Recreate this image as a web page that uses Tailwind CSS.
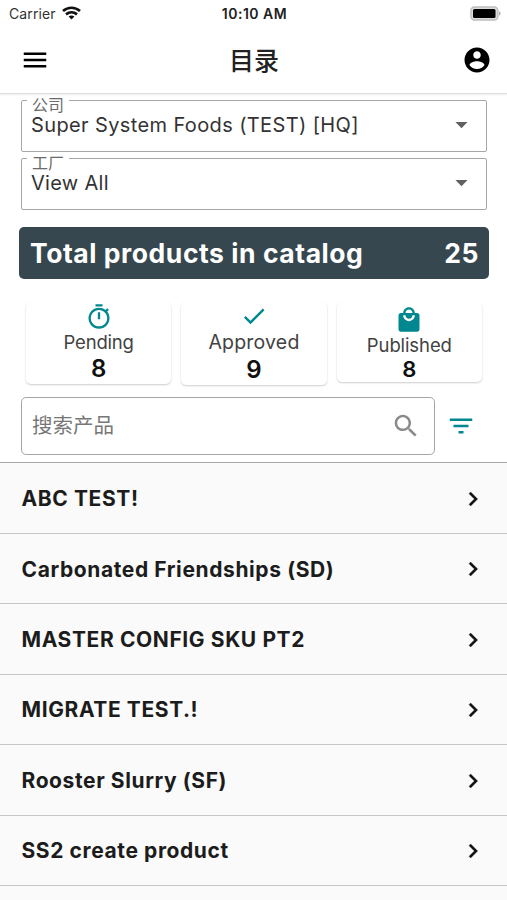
<!DOCTYPE html>
<html lang="zh">
<head>
  <meta charset="UTF-8">
  <meta name="viewport" content="width=device-width, initial-scale=1.0">
  <title>目录</title>
  <script src="https://cdn.jsdelivr.net/npm/@tailwindcss/browser@4"></script>
</head>
<body class="bg-white text-[#212121] font-['Inter','Noto_Sans_CJK_SC',sans-serif] h-[900px] overflow-hidden">

  <!-- Status bar -->
  <div class="h-7 pl-[9px] pr-[6px] grid grid-cols-3 items-center">
    <div class="flex items-center gap-[6px] text-sm leading-7 text-[#333] tracking-[0.1px]">
      Carrier
      <svg class="w-[19px] h-[14px] -mt-[3px]" viewBox="0 0 19 14" fill="none" stroke="#111" stroke-width="2.7">
        <path d="M1 5.1C6 .6 13 .6 18 5.1"/>
        <path d="M4 8.4c3.3-2.8 7.700-2.800 11 0"/>
        <path d="M9.500 13.500l-2.900-2.900c1.600-1.500 4.200-1.500 5.800 0z" fill="#111" stroke="none"/>
      </svg>
    </div>
    <div class="text-center text-sm leading-7 font-semibold tracking-[0.5px] whitespace-nowrap -ml-[1px]">10:10 AM</div>
    <svg class="w-[31px] h-[15px] justify-self-end -mt-[2px]" viewBox="0 0 31 15">
      <rect x=".9" y="1" width="27" height="13" rx="3.500" fill="#dcdcdc" stroke="#bdbdbd" stroke-width="1.300"/>
      <rect x="3" y="3" width="22.500" height="9" rx="1.500" fill="#000"/>
      <path d="M29 5.500c2 .6 2 3.400 0 4z" fill="#aaa"/>
    </svg>
  </div>

  <!-- Header -->
  <header class="h-[66px] pl-5 pr-[15px] pb-[2px] flex items-center justify-between border-b border-[#dedede] shadow-[0_1px_2px_rgba(0,0,0,0.08)]">
    <svg class="w-[30px] h-[30px]" viewBox="0 0 24 24" fill="#000"><path d="M3 18h18v-2H3v2zm0-5h18v-2H3v2zm0-7v2h18V6H3z"/></svg>
    <h1 class="text-[25px] font-medium leading-none pt-[3px] pr-[4px]">目录</h1>
    <svg class="w-[30px] h-[30px]" viewBox="0 0 24 24" fill="#000"><path d="M12 2C6.480 2 2 6.480 2 12s4.480 10 10 10 10-4.480 10-10S17.520 2 12 2zm0 3c1.660 0 3 1.340 3 3s-1.340 3-3 3-3-1.340-3-3 1.340-3 3-3zm0 14.200c-2.500 0-4.710-1.280-6-3.220.03-1.990 4-3.080 6-3.080 1.990 0 5.970 1.090 6 3.080-1.290 1.940-3.500 3.220-6 3.220z"/></svg>
  </header>

  <!-- Filters -->
  <section class="pt-[6px] pl-[21px] pr-5 flex flex-col gap-[6px]">
    <div class="relative h-[52px] border border-[#a6a6a6] rounded-[2px] pl-[9px] pr-[10px] flex items-start justify-between">
      <span class="absolute -top-[4px] left-[5px] px-[5px] bg-white text-base leading-4 text-[#6b6b6b]">公司</span>
      <span class="pt-[14px] text-xl leading-5 tracking-[0.38px] text-[#333]">Super System Foods (TEST) [HQ]</span>
      <svg class="w-[29px] h-[29px] mt-[9px]" viewBox="0 0 24 24" fill="#616161"><path d="M7 10l5 5 5-5z"/></svg>
    </div>
    <div class="relative h-[52px] border border-[#a6a6a6] rounded-[2px] pl-[9px] pr-[10px] flex items-start justify-between">
      <span class="absolute -top-[4px] left-[5px] px-[5px] bg-white text-base leading-4 text-[#6b6b6b]">工厂</span>
      <span class="pt-[14px] text-xl leading-5 tracking-[0.3px] text-[#333]">View All</span>
      <svg class="w-[29px] h-[29px] mt-[9px]" viewBox="0 0 24 24" fill="#616161"><path d="M7 10l5 5 5-5z"/></svg>
    </div>
  </section>

  <!-- Total -->
  <div class="mt-[17px] ml-[19px] mr-[18px] h-[52px] rounded-[5px] bg-[#37474f] pt-[2px] pl-[11px] pr-[10px] flex items-center justify-between text-white text-[26.5px] font-bold tracking-[0.55px]">
    <span>Total products in catalog</span>
    <span>25</span>
  </div>

  <!-- Counters -->
  <section class="mt-[23px] h-[95px] pl-[26px] pr-[25px] grid grid-cols-3 gap-[10px] items-start text-center">
    <div class="h-[82px] rounded-[5px] shadow-[0_1px_2px_rgba(0,0,0,0.2)] flex flex-col items-center pt-px">
      <svg class="w-[30px] h-[30px]" viewBox="0 0 24 24" fill="#00878f"><path d="M15 1H9v2h6V1zm-4 13h2V8h-2v6zm8.030-6.610l1.420-1.420c-.43-.51-.9-.99-1.410-1.410l-1.420 1.420C16.070 4.740 14.120 4 12 4c-4.970 0-9 4.030-9 9s4.020 9 9 9 9-4.030 9-9c0-2.120-.74-4.070-1.970-5.610zM12 20c-3.870 0-7-3.130-7-7s3.130-7 7-7 7 3.130 7 7-3.130 7-7 7z"/></svg>
      <span class="text-[18.5px] leading-[22px] -tracking-[0.2px] text-[#424242]">Pending</span>
      <span class="text-2xl leading-[31px] font-semibold text-[#111]">8</span>
    </div>
    <div class="h-[83px] rounded-[5px] shadow-[0_1px_2px_rgba(0,0,0,0.2)] flex flex-col items-center">
      <svg class="w-[30px] h-[30px]" viewBox="0 0 24 24" fill="#00878f"><path d="M9 16.170L4.830 12l-1.420 1.410L9 19 21 7l-1.410-1.410z"/></svg>
      <span class="text-[19.5px] leading-[25px] tracking-[0.2px] text-[#424242]">Approved</span>
      <span class="text-2xl leading-[30px] font-semibold text-[#111]">9</span>
    </div>
    <div class="h-[80px] rounded-[5px] shadow-[0_1px_2px_rgba(0,0,0,0.2)] flex flex-col items-center pt-[4px]">
      <svg class="w-[30px] h-[30px]" viewBox="0 0 24 24" fill="#00878f"><path d="M19 6h-2c0-2.760-2.240-5-5-5S7 3.240 7 6H5c-1.100 0-1.990.9-1.990 2L3 20c0 1.100.9 2 2 2h14c1.100 0 2-.9 2-2V8c0-1.100-.9-2-2-2zm-7-3c1.660 0 3 1.340 3 3H9c0-1.660 1.340-3 3-3zm0 10c-2.760 0-5-2.240-5-5h2c0 1.660 1.340 3 3 3s3-1.340 3-3h2c0 2.760-2.240 5-5 5z"/></svg>
      <span class="text-[18.5px] leading-[23px] -tracking-[0.1px] text-[#424242]">Published</span>
      <span class="text-[22px] leading-[25px] font-semibold text-[#111]">8</span>
    </div>
  </section>

  <!-- Search -->
  <div class="pl-[21px] pr-[31px] flex items-center justify-between">
    <div class="w-[414px] h-[58px] border border-[#a6a6a6] rounded-[5px] pl-[10px] pr-[13px] flex items-center justify-between">
      <span class="text-[20.5px] leading-none text-[#777]">搜索产品</span>
      <svg class="w-[30px] h-[30px]" viewBox="0 0 24 24" fill="#8a8a8a"><path d="M15.500 14h-.79l-.28-.27C15.410 12.590 16 11.110 16 9.500 16 5.910 13.090 3 9.500 3S3 5.910 3 9.500 5.910 16 9.500 16c1.610 0 3.090-.59 4.230-1.570l.27.28v.79l5 4.990L20.490 19l-4.990-5zm-6 0C7.010 14 5 11.990 5 9.500S7.010 5 9.500 5 14 7.010 14 9.500 11.990 14 9.500 14z"/></svg>
    </div>
    <svg class="w-[30px] h-[30px]" viewBox="0 0 24 24" fill="#00878f"><path d="M10 18h4v-2h-4v2zM3 6v2h18V6H3zm3 7h12v-2H6v2z"/></svg>
  </div>

  <!-- Product list -->
  <ul id="productList" class="mt-[7px] bg-[#fafafa] border-t border-[#a6a6a6] h-[440px] pt-[0.6px]"></ul>

<script>
  const products = [
    "ABC TEST!",
    "Carbonated Friendships (SD)",
    "MASTER CONFIG SKU PT2",
    "MIGRATE TEST.!",
    "Rooster Slurry (SF)",
    "SS2 create product"
  ];

  const productList = document.getElementById("productList");
  products.forEach(name => {
    productList.innerHTML += `
      <li class="h-[70.4px] pl-[21.5px] pr-[20.5px] pt-[1.5px] flex items-center justify-between border-b border-[#c6c6c6]">
        <span class="text-[21px] font-bold tracking-[0.6px] text-[#1c1c1c]">${name}</span>
        <svg class="w-[28px] h-[28px]" viewBox="0 0 24 24" fill="#111" stroke="#111" stroke-width="0.3"><path d="M10 6L8.590 7.410 13.170 12l-4.580 4.590L10 18l6-6z"/></svg>
      </li>
    `;
  });
</script>

</body>
</html>
